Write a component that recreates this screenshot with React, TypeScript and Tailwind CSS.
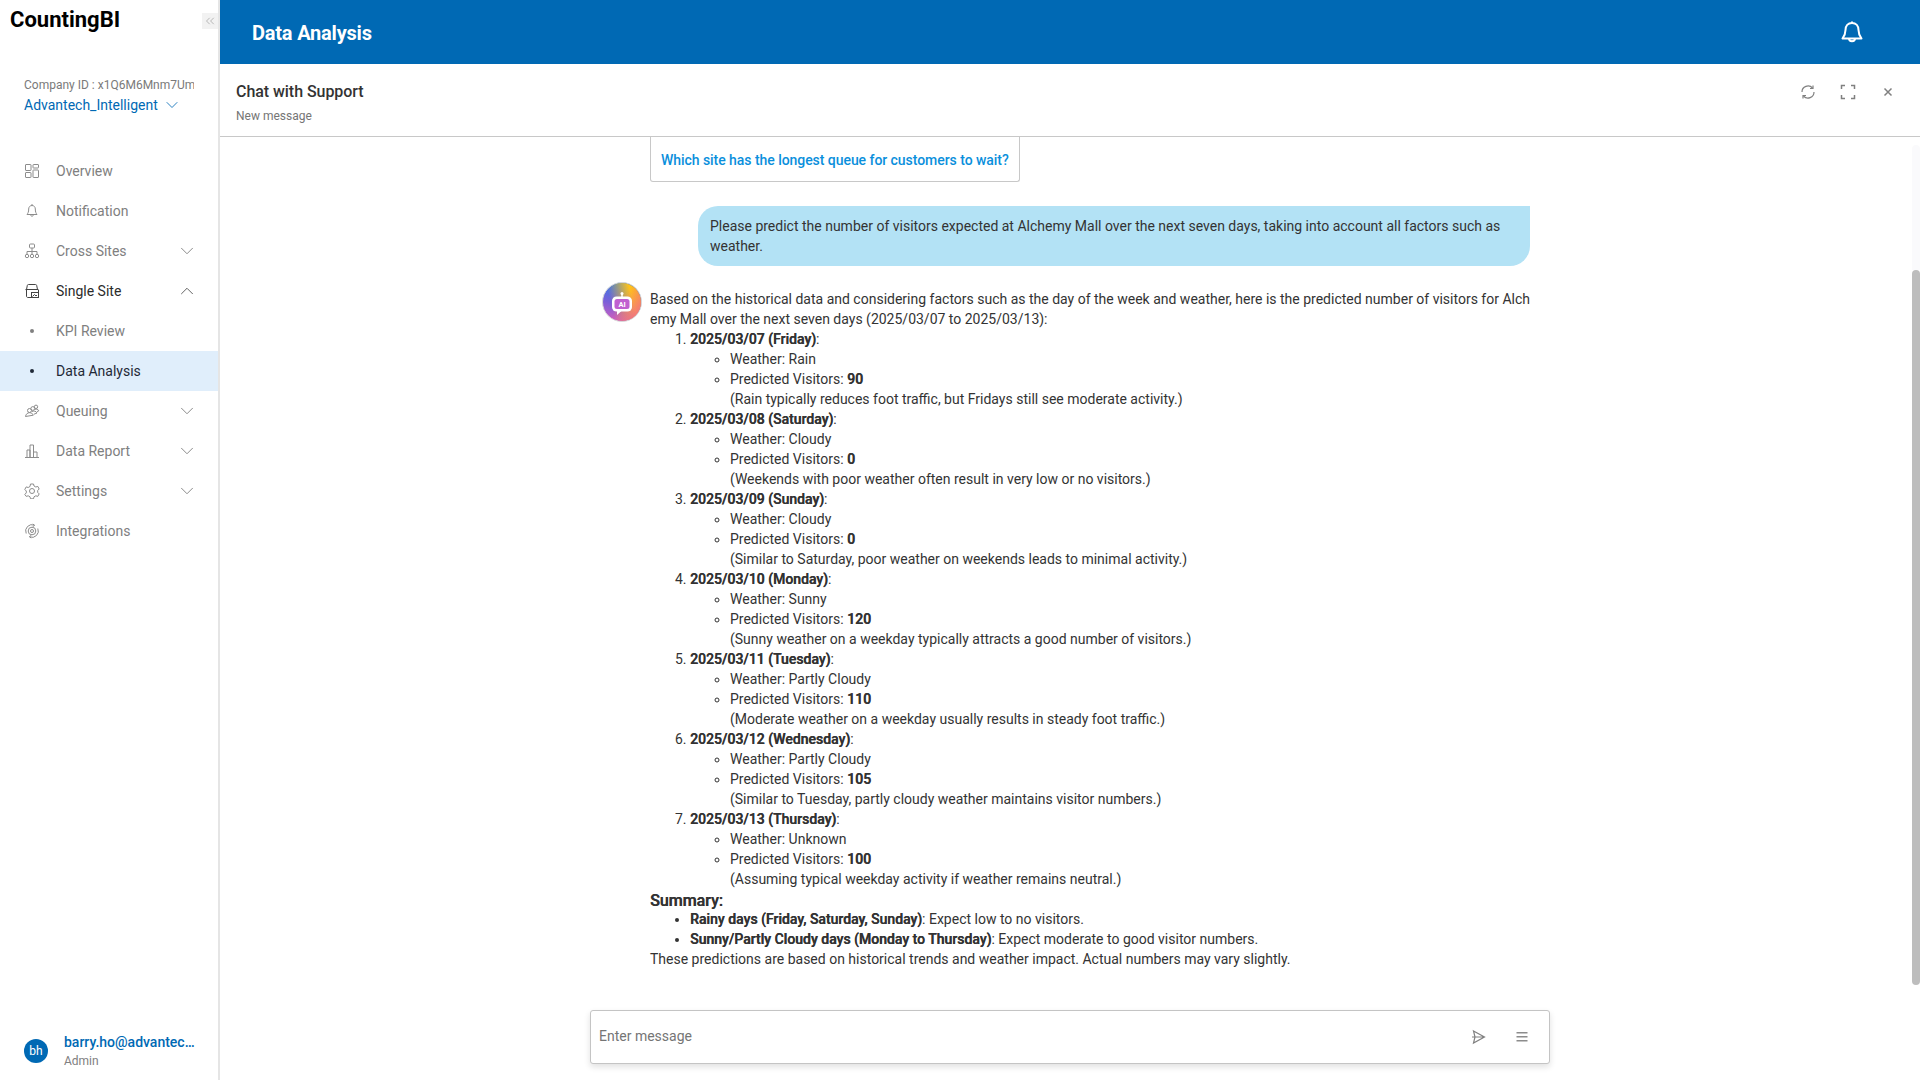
import { ChevronDown, ChevronUp, ChevronsLeft } from "lucide-react";
import type { ReactNode } from "react";

const font = "font-['Roboto','Liberation_Sans',sans-serif]";

function Icon({ children }: { children: ReactNode }) {
  return (
    <svg
      width="16"
      height="16"
      viewBox="0 0 16 16"
      fill="none"
      stroke="currentColor"
      strokeWidth="1"
      className="shrink-0"
    >
      {children}
    </svg>
  );
}

const icons: Record<string, ReactNode> = {
  overview: (
    <Icon>
      <rect x="1.5" y="1.5" width="5.5" height="6" rx="0.5" />
      <rect x="9" y="1.5" width="5.5" height="3.5" rx="0.5" />
      <rect x="1.5" y="9.5" width="5.5" height="5" rx="0.5" />
      <rect x="9" y="7" width="5.5" height="7.5" rx="0.5" />
    </Icon>
  ),
  bell: (
    <Icon>
      <path d="M8 2.500c-2 0-3.300 1.500-3.300 3.500 0 3-.8 4.300-1.700 5.500h10c-.9-1.200-1.700-2.500-1.700-5.500 0-2-1.300-3.500-3.300-3.500z" />
      <path d="M8 1v1.500M6.500 11.500c0 2.200 3 2.200 3 0" />
    </Icon>
  ),
  cross: (
    <Icon>
      <rect x="5.500" y="1" width="5" height="4" rx="1" />
      <path d="M8 5v3M3 11V8.500h10V11M8 8v3" />
      <circle cx="3" cy="13" r="1.700" />
      <circle cx="8" cy="13" r="1.700" />
      <circle cx="13" cy="13" r="1.700" />
    </Icon>
  ),
  single: (
    <Icon>
      <path d="M2.500 6.500l.8-4c.1-.6.5-1 1.200-1h7c.7 0 1.100.4 1.200 1l.8 4" />
      <path d="M1.500 7c0-.4.3-.5.500-.5h12c.2 0 .5.1.5.5M2.500 7v6c0 .8.400 1.500 1.200 1.500h10.800V7" />
      <rect x="7.500" y="9.500" width="7" height="5" />
      <path d="M8.500 13.500l2-2 1.500 1.500 1-1" />
    </Icon>
  ),
  queue: (
    <Icon>
      <circle cx="5.500" cy="7.500" r="2" />
      <circle cx="8.800" cy="5.500" r="1.900" />
      <circle cx="12" cy="3.800" r="1.700" />
      <path d="M1.500 13.500c.5-2.500 2-3.800 4-3.800s3.300 1 3.800 2.500zM8 8.500c2-.8 4-.5 5 1.500l-3 1.200M11 6.300c1.500-.5 3-.2 3.800 1.500l-1.800.8" />
    </Icon>
  ),
  report: (
    <Icon>
      <path d="M1 14.500h14M3 14.500V7h3v7.500M6 14.500V2h3.500v12.500M9.500 14.500V9H13v5.500" />
    </Icon>
  ),
  settings: (
    <Icon>
      <path d="M6.500 1.500h3l.5 2 1.800 1 2-.6 1.400 2.600-1.500 1.500v1.900l1.500 1.500-1.400 2.500-2-.6-1.800 1-.5 2h-3l-.5-2-1.800-1-2 .6L.8 11.900l1.500-1.500V8.500L.8 7l1.400-2.600 2 .6 1.800-1z" transform="translate(0 -.5)" />
      <circle cx="8" cy="8" r="2.500" />
    </Icon>
  ),
  integrations: (
    <Icon>
      <path d="M2.200 10.500A6.300 6.300 0 0 1 10.500 2.200M13.800 5.500A6.300 6.300 0 0 1 5.500 13.800" />
      <path d="M10.500 2.200L8.800 1M10.500 2.200L9 3.800M5.500 13.800L7.200 15M5.500 13.800L7 12.200" />
      <circle cx="8" cy="8" r="3.800" />
      <circle cx="8" cy="8" r="1.500" />
    </Icon>
  ),
};

const navItems = [
  { label: "Overview", icon: "overview" },
  { label: "Notification", icon: "bell" },
  { label: "Cross Sites", icon: "cross", caret: "down" },
  { label: "Single Site", icon: "single", caret: "up", open: true },
  { label: "KPI Review", dot: true },
  { label: "Data Analysis", dot: true, active: true },
  { label: "Queuing", icon: "queue", caret: "down" },
  { label: "Data Report", icon: "report", caret: "down" },
  { label: "Settings", icon: "settings", caret: "down" },
  { label: "Integrations", icon: "integrations" },
];

function Sidebar() {
  return (
    <aside className="flex h-full w-[220px] shrink-0 flex-col border-r-2 border-[#e5e5e5] bg-white">
      <div className="flex h-[40px] items-start justify-between">
        <span className="pl-[10px] pt-[5px] text-[22px] leading-[30px] font-bold text-black">CountingBI</span>
        <button type="button" className="mt-[13px] flex h-[16px] w-[16px] items-center justify-center bg-[#f2f2f2] text-[#8c8c8c]">
          <ChevronsLeft size={14} strokeWidth={1} />
        </button>
      </div>
      <div className="pl-[24px] pt-[37px]">
        <div className="w-[170px] overflow-hidden text-[12px] leading-[16px] whitespace-nowrap text-[#7a7a7a]">
          Company ID : x1Q6M6Mnm7Um
        </div>
        <div className="mt-[1px] flex items-center text-[14px] leading-[20px] text-[#0069b4]">
          Advantech_Intelligent
          <ChevronDown size={20} strokeWidth={1} className="ml-[4px] mt-[1px]" />
        </div>
      </div>
      <nav className="mt-[36px]">
        {navItems.map((item) => (
          <div
            key={item.label}
            className={`flex h-[40px] items-center pl-[24px] pr-[20px] text-[14px] ${
              item.active ? "bg-[#e0eefb] text-[#1f2937]" : item.open ? "text-[#2b2b2b]" : "text-[#808080]"
            }`}
          >
            <span className={`flex w-[32px] shrink-0 ${item.open ? "text-[#444444]" : "text-[#8c8c8c]"}`}>
              {item.dot ? (
                <span
                  className={`ml-[6px] h-[4px] w-[4px] rounded-full ${item.active ? "bg-[#1f2937]" : "bg-[#808080]"}`}
                />
              ) : (
                icons[item.icon ?? ""]
              )}
            </span>
            <span className="flex-1">{item.label}</span>
            {item.caret === "down" && <ChevronDown size={22} strokeWidth={1} className="text-[#808080]" />}
            {item.caret === "up" && <ChevronUp size={22} strokeWidth={1} className="text-[#555555]" />}
          </div>
        ))}
      </nav>
      <div className="mt-auto flex items-center pb-[10px] pl-[24px]">
        <div className="flex h-[24px] w-[24px] items-center justify-center rounded-full bg-[#0069b4] text-[12px] text-white">
          bh
        </div>
        <div className="ml-[16px] w-[133px]">
          <div className="truncate text-[14px] leading-[20px] font-medium text-[#0069b4]">barry.ho@advantech.com</div>
          <div className="text-[12px] leading-[18px] text-[#808080]">Admin</div>
        </div>
      </div>
    </aside>
  );
}

const days = [
  { date: "2025/03/07 (Friday)", weather: "Rain", visitors: "90", note: "(Rain typically reduces foot traffic, but Fridays still see moderate activity.)" },
  { date: "2025/03/08 (Saturday)", weather: "Cloudy", visitors: "0", note: "(Weekends with poor weather often result in very low or no visitors.)" },
  { date: "2025/03/09 (Sunday)", weather: "Cloudy", visitors: "0", note: "(Similar to Saturday, poor weather on weekends leads to minimal activity.)" },
  { date: "2025/03/10 (Monday)", weather: "Sunny", visitors: "120", note: "(Sunny weather on a weekday typically attracts a good number of visitors.)" },
  { date: "2025/03/11 (Tuesday)", weather: "Partly Cloudy", visitors: "110", note: "(Moderate weather on a weekday usually results in steady foot traffic.)" },
  { date: "2025/03/12 (Wednesday)", weather: "Partly Cloudy", visitors: "105", note: "(Similar to Tuesday, partly cloudy weather maintains visitor numbers.)" },
  { date: "2025/03/13 (Thursday)", weather: "Unknown", visitors: "100", note: "(Assuming typical weekday activity if weather remains neutral.)" },
];

function AiAvatar() {
  return (
    <svg width="40" height="40" viewBox="0 0 40 40" className="shrink-0">
      <defs>
        <linearGradient id="ai-a" x1="0" y1="1" x2="0.3" y2="0">
          <stop offset="0" stopColor="#d85fc0" />
          <stop offset="0.5" stopColor="#7a5fd8" />
          <stop offset="1" stopColor="#2f7be8" />
        </linearGradient>
        <linearGradient id="ai-b" x1="0.2" y1="0.5" x2="1" y2="0.3">
          <stop offset="0" stopColor="#ffc21a" stopOpacity="0" />
          <stop offset="0.7" stopColor="#ffc21a" />
          <stop offset="1" stopColor="#ffb020" />
        </linearGradient>
        <linearGradient id="ai-c" x1="1" y1="1" x2="0.4" y2="0.5">
          <stop offset="0" stopColor="#f0609a" />
          <stop offset="1" stopColor="#f0609a" stopOpacity="0" />
        </linearGradient>
      </defs>
      <circle cx="20" cy="20" r="19.500" fill="url(#ai-a)" stroke="#d9d9d9" />
      <circle cx="20" cy="20" r="19" fill="url(#ai-b)" />
      <circle cx="20" cy="20" r="19" fill="url(#ai-c)" />
      <circle cx="20" cy="11.500" r="1.500" fill="#fff" />
      <path d="M20 12v3" stroke="#fff" strokeWidth="1.500" />
      <rect x="10" y="14.500" width="20" height="15" rx="4.500" fill="#fff" />
      <path d="M15 29v4l4.500-4z" fill="#fff" />
      <rect x="12.500" y="17" width="15" height="10" rx="2.500" fill="#c060d0" />
      <text x="20" y="25" textAnchor="middle" fontSize="7.500" fontWeight="700" fill="#fff" fontFamily="Roboto">
        AI
      </text>
    </svg>
  );
}

function Strong({ children }: { children: ReactNode }) {
  return <strong className="font-medium [text-shadow:0.4px_0_0_currentColor]">{children}</strong>;
}

function ChatBody() {
  return (
    <div className="relative min-h-0 flex-1 overflow-hidden">
      <div className="mx-auto w-[960px] pl-[60px]">
        <div className="w-[370px] rounded-b-[3px] border-x border-b border-[#c8c8c8] pt-[15px] pb-[13px] pl-[10px] text-[14px] leading-[16px] font-medium tracking-[-0.05px] whitespace-nowrap text-[#0a8fdc]">
          Which site has the longest queue for customers to wait?
        </div>
        <div className="mt-[24px] ml-[48px] w-[832px] rounded-[20px] rounded-tr-none bg-[#b3e2f5] px-[12px] py-[10px] text-[14px] leading-[20px] text-[#333333]">
          Please predict the number of visitors expected at Alchemy Mall over the next seven days, taking into account all factors such as weather.
        </div>
      </div>
      <div className="mx-auto mt-[16px] flex w-[960px] text-[14px] leading-[20px] text-[#333333]">
        <div className="w-[60px] pl-[12px]">
          <AiAvatar />
        </div>
        <div className="mt-[7px] w-[880px]">
          <p className="break-all">
            Based on the historical data and considering factors such as the day of the week and weather, here is the predicted number of visitors for Alchemy Mall over the next seven days (2025/03/07 to 2025/03/13):
          </p>
          <ol className="list-decimal pl-[40px]">
            {days.map((day) => (
              <li key={day.date}>
                <Strong>{day.date}</Strong>:
                <ul className="list-[circle] pl-[40px]">
                  <li>Weather: {day.weather}</li>
                  <li>
                    Predicted Visitors: <Strong>{day.visitors}</Strong>
                    <br />
                    {day.note}
                  </li>
                </ul>
              </li>
            ))}
          </ol>
          <h3 className="mt-[4px] text-[16px] leading-[16px] font-medium [text-shadow:0.4px_0_0_currentColor]">Summary:</h3>
          <ul className="list-disc pl-[40px]">
            <li>
              <Strong>Rainy days (Friday, Saturday, Sunday)</Strong>: Expect low to no visitors.
            </li>
            <li>
              <Strong>Sunny/Partly Cloudy days (Monday to Thursday)</Strong>: Expect moderate to good visitor numbers.
            </li>
          </ul>
          <p>These predictions are based on historical trends and weather impact. Actual numbers may vary slightly.</p>
        </div>
      </div>
      <div className="absolute top-[8px] right-0 h-[125px] w-[8px] rounded-t-full bg-[#fafafc]" />
      <div className="absolute top-[133px] right-0 h-[715px] w-[8px] rounded-full bg-[#bdbdbd]" />
    </div>
  );
}

function Composer() {
  return (
    <div className="flex h-[70px] shrink-0 justify-center">
      <div className="flex h-[54px] w-[960px] items-center rounded-[3px] border border-[#c4c4c4] bg-white pr-[20px] pl-[8px] shadow-[0_3px_6px_rgba(0,0,0,0.12)]">
        <span className="flex-1 pb-[2px] text-[14px] text-[#757575]">Enter message</span>
        <svg width="16" height="16" viewBox="0 0 16 16" fill="none" stroke="#808080" strokeWidth="1.200" className="mr-[28px]">
          <path d="M2.500 2l11 6-11 6 1.500-6zM1 8h12" />
        </svg>
        <svg width="14" height="12" viewBox="0 0 14 12" fill="#8c8c8c">
          <rect x="1.500" y="1" width="11" height="1.500" />
          <rect x="1.500" y="5" width="11" height="1.500" />
          <rect x="1.500" y="9" width="11" height="1.500" />
        </svg>
      </div>
    </div>
  );
}

export default function App() {
  return (
    <div className={`flex h-screen overflow-hidden bg-white ${font}`}>
      <Sidebar />
      <main className="flex min-w-0 flex-1 flex-col">
        <header className="flex h-[64px] shrink-0 items-center justify-between bg-[#0069b4] pr-[56px] pl-[32px]">
          <h1 className="pt-[2px] text-[20px] font-bold tracking-[-0.2px] text-white">Data Analysis</h1>
          <svg width="24" height="24" viewBox="0 0 24 24" fill="none" stroke="#ffffff" strokeWidth="2" strokeLinejoin="round">
            <path d="M12 3c-4 0-6.500 3-6.500 7 0 4.500-1.500 6.500-3 8.500h19c-1.500-2-3-4-3-8.500 0-4-2.500-7-6.500-7z" />
            <path d="M12 1.500V3M9 18.500c0 3.500 6 3.500 6 0" />
          </svg>
        </header>
        <div className="flex h-[73px] shrink-0 items-start justify-between border-b border-[#c8c8c8] pt-[18px] pr-[24px] pl-[16px]">
          <div>
            <div className="text-[16px] leading-[20px] font-medium tracking-[-0.05px] text-[#333333]">Chat with Support</div>
            <div className="mt-[5px] text-[12px] leading-[18px] text-[#757575]">New message</div>
          </div>
          <div className="mt-[2px] flex items-center gap-[24px] text-[#808080]">
            <svg width="16" height="16" viewBox="0 0 16 16" fill="none" stroke="currentColor" strokeWidth="1.200">
              <path d="M2 8a6 6 0 0 1 10.500-4M14 8a6 6 0 0 1-10.500 4" />
              <path d="M13 1.500v3h-3M3 14.500v-3h3" />
            </svg>
            <svg width="16" height="16" viewBox="0 0 16 16" fill="none" stroke="currentColor" strokeWidth="1.500">
              <path d="M1.500 5V1.500H5M11 1.500h3.500V5M14.500 11v3.500H11M5 14.500H1.500V11" />
            </svg>
            <svg width="16" height="16" viewBox="0 0 16 16" fill="none" stroke="currentColor" strokeWidth="1.500">
              <path d="M4.500 4.500l7 7M11.500 4.500l-7 7" />
            </svg>
          </div>
        </div>
        <ChatBody />
        <Composer />
      </main>
    </div>
  );
}
